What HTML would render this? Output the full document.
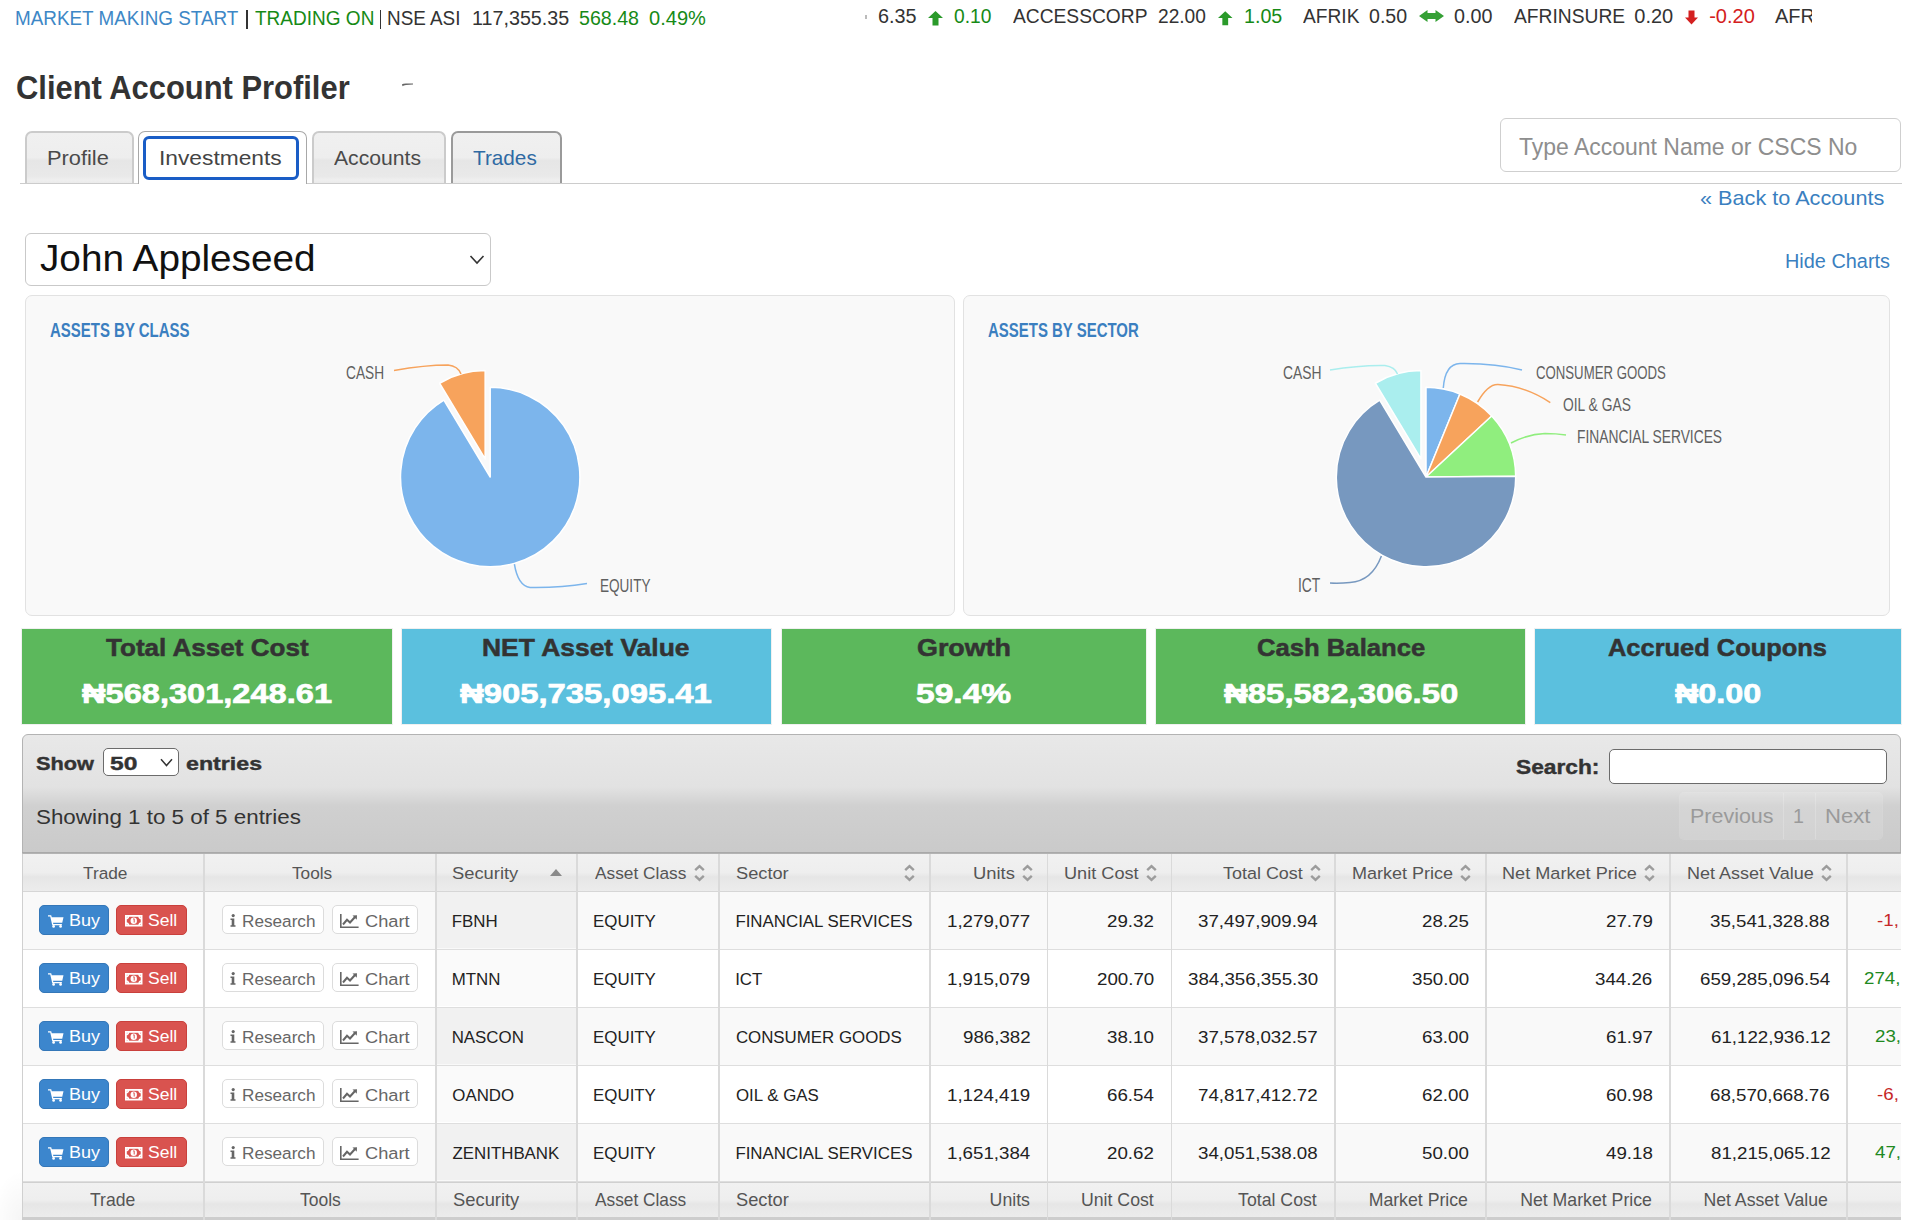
<!DOCTYPE html><html><head><meta charset="utf-8"><title>Client Account Profiler</title><style>
*{box-sizing:border-box;margin:0;padding:0}
html,body{width:1920px;height:1220px;overflow:hidden;background:#fff}
body{position:relative;font-family:"Liberation Sans",sans-serif}
.t{position:absolute;white-space:nowrap;transform-origin:0 0;font-family:"Liberation Sans",sans-serif}
.a{position:absolute}
svg.a{overflow:visible}
</style></head><body><span class="t" style="left:15.48px;top:9.40px;font-size:19.86px;line-height:19.86px;color:#3d87c6;transform:scaleX(0.9502);">MARKET MAKING START</span><div class="a" style="left:246px;top:10.3px;width:1.5px;height:19.2px;background:#333"></div><span class="t" style="left:254.62px;top:9.40px;font-size:19.86px;line-height:19.86px;color:#168a16;transform:scaleX(0.9574);">TRADING ON</span><div class="a" style="left:379.8px;top:10.3px;width:1.5px;height:19.2px;background:#333"></div><span class="t" style="left:387.23px;top:9.40px;font-size:19.86px;line-height:19.86px;color:#333;transform:scaleX(0.9507);">NSE ASI</span><span class="t" style="left:471.51px;top:9.40px;font-size:19.86px;line-height:19.86px;color:#333;transform:scaleX(0.9929);">117,355.35</span><span class="t" style="left:579.31px;top:9.40px;font-size:19.86px;line-height:19.86px;color:#168a16;transform:scaleX(0.9882);">568.48</span><span class="t" style="left:649.29px;top:9.40px;font-size:19.86px;line-height:19.86px;color:#168a16;transform:scaleX(1.0100);">0.49%</span><div class="a" style="left:865px;top:15px;width:2px;height:4px;background:#bbb"></div><span class="t" style="left:877.76px;top:5.60px;font-size:20.0px;line-height:20.0px;color:#333;transform:scaleX(0.9905);">6.35</span><svg class="a" style="left:927.5px;top:11px" width="15.0" height="14.5" viewBox="0 0 15 14.5"><path d="M7.5 0 L15 7 L10.5 7 L10.5 14.5 L4.5 14.5 L4.5 7 L0 7 Z" fill="#2a9a2a"/></svg><span class="t" style="left:953.83px;top:5.60px;font-size:20.0px;line-height:20.0px;color:#168a16;transform:scaleX(0.9599);">0.10</span><span class="t" style="left:1012.50px;top:5.60px;font-size:20.0px;line-height:20.0px;color:#333;transform:scaleX(0.9605);">ACCESSCORP</span><span class="t" style="left:1157.79px;top:5.60px;font-size:20.0px;line-height:20.0px;color:#333;transform:scaleX(0.9570);">22.00</span><svg class="a" style="left:1218px;top:11px" width="14.5" height="14.5" viewBox="0 0 15 14.5"><path d="M7.5 0 L15 7 L10.5 7 L10.5 14.5 L4.5 14.5 L4.5 7 L0 7 Z" fill="#2a9a2a"/></svg><span class="t" style="left:1243.52px;top:5.60px;font-size:20.0px;line-height:20.0px;color:#168a16;transform:scaleX(0.9835);">1.05</span><span class="t" style="left:1302.70px;top:5.60px;font-size:20.0px;line-height:20.0px;color:#333;transform:scaleX(0.9582);">AFRIK</span><span class="t" style="left:1369.31px;top:5.60px;font-size:20.0px;line-height:20.0px;color:#333;transform:scaleX(0.9786);">0.50</span><svg class="a" style="left:1419px;top:10px" width="25" height="12" viewBox="0 0 25 12"><path d="M0 6 L8.5 0 L8.5 3 L16.5 3 L16.5 0 L25 6 L16.5 12 L16.5 9 L8.5 9 L8.5 12 Z" fill="#35a035"/></svg><span class="t" style="left:1454.31px;top:5.60px;font-size:20.0px;line-height:20.0px;color:#333;transform:scaleX(0.9866);">0.00</span><span class="t" style="left:1513.60px;top:5.60px;font-size:20.0px;line-height:20.0px;color:#333;transform:scaleX(0.9623);">AFRINSURE</span><span class="t" style="left:1634.30px;top:5.60px;font-size:20.0px;line-height:20.0px;color:#333;">0.20</span><svg class="a" style="left:1685px;top:9.5px" width="13" height="14.5" viewBox="0 0 13 14.5"><path d="M6.5 14.5 L13 7.5 L9.5 7.5 L9.5 0.5 L3.5 0.5 L3.5 7.5 L0 7.5 Z" fill="#d42020"/></svg><span class="t" style="left:1709.20px;top:5.60px;font-size:20.0px;line-height:20.0px;color:#d42020;">-0.20</span><div class="a" style="left:1770px;top:0;width:42px;height:36px;overflow:hidden"><span class="t" style="left:5.00px;top:5.60px;font-size:20.0px;line-height:20.0px;color:#333;">AFRINSURE</span></div><span class="t" style="left:16.23px;top:70.40px;font-size:34.0px;line-height:34.0px;color:#333;font-weight:bold;transform:scaleX(0.9089);">Client Account Profiler</span><svg class="a" style="left:400px;top:80px" width="16" height="10" viewBox="0 0 16 10"><path d="M2 4.2 Q3 3.6 6 3.5 L13 3.6 L13 4.4 L6 5 Q3.5 5.4 2.5 6.2 Z" fill="#666"/></svg><div class="a" style="left:25px;top:131.3px;width:108.5px;height:52.5px;border:2px solid #cbcbcb;border-bottom:none;border-radius:7px 7px 0 0;background:linear-gradient(to bottom,#f0f0f0 0%,#eeeeee 48%,#e6e6e6 54%,#e9e9e9 85%,#efefef 92%,#e9e9e9 100%)"></div><span class="t" style="left:46.58px;top:148.00px;font-size:20.29px;line-height:20.29px;color:#4a4a4a;transform:scaleX(1.0759);">Profile</span><div class="a" style="left:138px;top:131.3px;width:169px;height:52.5px;border:1.7px solid #a8a8a8;border-bottom:none;border-radius:7px 7px 0 0;background:#fff"></div><div class="a" style="left:143px;top:136px;width:155.5px;height:43.5px;border:3px solid #1a5dc6;border-radius:6px"></div><span class="t" style="left:158.78px;top:148.00px;font-size:20.29px;line-height:20.29px;color:#444;transform:scaleX(1.1222);">Investments</span><div class="a" style="left:311.5px;top:131.3px;width:134.5px;height:52.5px;border:2px solid #cbcbcb;border-bottom:none;border-radius:7px 7px 0 0;background:linear-gradient(to bottom,#f0f0f0 0%,#eeeeee 48%,#e6e6e6 54%,#e9e9e9 85%,#efefef 92%,#e9e9e9 100%)"></div><span class="t" style="left:334.00px;top:148.00px;font-size:20.29px;line-height:20.29px;color:#4a4a4a;transform:scaleX(1.0434);">Accounts</span><div class="a" style="left:451px;top:131.3px;width:110.5px;height:52.5px;border:2px solid #9a9a9a;border-bottom:none;border-radius:7px 7px 0 0;background:linear-gradient(to bottom,#f0f0f0 0%,#eeeeee 48%,#e6e6e6 54%,#e9e9e9 85%,#efefef 92%,#e9e9e9 100%)"></div><span class="t" style="left:472.59px;top:148.00px;font-size:20.29px;line-height:20.29px;color:#2f6aa3;transform:scaleX(1.0220);">Trades</span><div class="a" style="left:20px;top:182.6px;width:118px;height:1.7px;background:#cccccc"></div><div class="a" style="left:307px;top:182.6px;width:1595px;height:1.7px;background:#cccccc"></div><div class="a" style="left:1499.5px;top:118.3px;width:401px;height:53.5px;border:1.5px solid #cfcfcf;border-radius:6px;background:#fff"></div><span class="t" style="left:1518.92px;top:134.50px;font-size:23.86px;line-height:23.86px;color:#8e8e8e;transform:scaleX(0.9628);">Type Account Name or CSCS No</span><span class="t" style="left:1700.16px;top:188.40px;font-size:20.57px;line-height:20.57px;color:#3a7fc0;transform:scaleX(1.0539);">« Back to Accounts</span><span class="t" style="left:1785.37px;top:251.70px;font-size:19.57px;line-height:19.57px;color:#3a7fc0;transform:scaleX(1.0165);">Hide Charts</span><div class="a" style="left:25px;top:232.5px;width:465.5px;height:53.5px;border:1.5px solid #c9c9c9;border-radius:6px;background:#fff"></div><span class="t" style="left:40.39px;top:239.50px;font-size:37.14px;line-height:37.14px;color:#111;transform:scaleX(1.0428);">John Appleseed</span><svg class="a" style="left:469px;top:254px" width="16" height="11" viewBox="0 0 16 11"><path d="M1.5 2 L8 9 L14.5 2" fill="none" stroke="#333" stroke-width="1.6"/></svg><div class="a" style="left:24.5px;top:294.8px;width:930px;height:321.7px;border:1.5px solid #e2e2e2;border-radius:7px;background:#f9f9f9"></div><div class="a" style="left:963px;top:294.8px;width:926.5px;height:321.7px;border:1.5px solid #e2e2e2;border-radius:7px;background:#f9f9f9"></div><span class="t" style="left:49.64px;top:320.00px;font-size:20.71px;line-height:20.71px;color:#3b7fc0;font-weight:bold;transform:scaleX(0.7236);">ASSETS BY CLASS</span><span class="t" style="left:988.14px;top:320.00px;font-size:20.71px;line-height:20.71px;color:#3b7fc0;font-weight:bold;transform:scaleX(0.7229);">ASSETS BY SECTOR</span><svg class="a" style="left:0;top:0" width="1920" height="1220"><path d="M490.20 477.00 L490.20 387.30 A89.7 89.7 0 1 1 443.89 400.18 Z" fill="#7cb5ec" stroke="#fff" stroke-width="1.5" stroke-linejoin="round"/><path d="M485.16 458.89 L439.58 383.26 A88.3 88.3 0 0 1 485.16 370.59 Z" fill="#f7a35c" stroke="#fff" stroke-width="1.5" stroke-linejoin="round"/><path d="M394 370.5 Q425 365 448 365 Q458 366 461 374" fill="none" stroke="#f7a35c" stroke-width="1.5"/><path d="M514.4 564.2 Q518 586 530 587.5 Q560 588 587 583.5" fill="none" stroke="#7cb5ec" stroke-width="1.5"/><path d="M1426.00 477.00 L1426.00 387.30 A89.7 89.7 0 0 1 1459.89 393.95 Z" fill="#7cb5ec" stroke="#fff" stroke-width="1.5" stroke-linejoin="round"/><path d="M1426.00 477.00 L1459.89 393.95 A89.7 89.7 0 0 1 1491.71 415.94 Z" fill="#f7a35c" stroke="#fff" stroke-width="1.5" stroke-linejoin="round"/><path d="M1426.00 477.00 L1491.71 415.94 A89.7 89.7 0 0 1 1515.70 476.22 Z" fill="#90ee7e" stroke="#fff" stroke-width="1.5" stroke-linejoin="round"/><path d="M1426.00 477.00 L1515.70 476.22 A89.7 89.7 0 1 1 1379.69 400.18 Z" fill="#7798bf" stroke="#fff" stroke-width="1.5" stroke-linejoin="round"/><path d="M1420.96 458.89 L1375.38 383.26 A88.3 88.3 0 0 1 1420.96 370.59 Z" fill="#aaeeee" stroke="#fff" stroke-width="1.5" stroke-linejoin="round"/><path d="M1330 370 Q1360 365 1385 365.5 Q1395 367 1397.5 374" fill="none" stroke="#aaeeee" stroke-width="1.5"/><path d="M1443.3 388 Q1445 364 1460 363.5 Q1495 363 1522 370" fill="none" stroke="#7cb5ec" stroke-width="1.5"/><path d="M1477.6 402 Q1488 384 1498 384.5 Q1525 386 1550.3 402.6" fill="none" stroke="#f7a35c" stroke-width="1.5"/><path d="M1511 443 Q1528 434 1545 433.5 Q1556 433.5 1566 435" fill="none" stroke="#90ee7e" stroke-width="1.5"/><path d="M1381.4 556 Q1372 581 1350 582.5 Q1340 583.5 1330 583" fill="none" stroke="#7798bf" stroke-width="1.5"/></svg><span class="t" style="left:346.33px;top:363.80px;font-size:18.29px;line-height:18.29px;color:#606060;transform:scaleX(0.7484);">CASH</span><span class="t" style="left:599.60px;top:576.50px;font-size:18.57px;line-height:18.57px;color:#606060;transform:scaleX(0.7302);">EQUITY</span><span class="t" style="left:1282.81px;top:363.60px;font-size:18.0px;line-height:18.0px;color:#606060;transform:scaleX(0.7692);">CASH</span><span class="t" style="left:1536.14px;top:363.60px;font-size:18.0px;line-height:18.0px;color:#606060;transform:scaleX(0.7330);">CONSUMER GOODS</span><span class="t" style="left:1563.20px;top:395.70px;font-size:18.57px;line-height:18.57px;color:#606060;transform:scaleX(0.7445);">OIL &amp; GAS</span><span class="t" style="left:1577.32px;top:427.00px;font-size:19.14px;line-height:19.14px;color:#606060;transform:scaleX(0.7223);">FINANCIAL SERVICES</span><span class="t" style="left:1298.17px;top:574.90px;font-size:20.29px;line-height:20.29px;color:#606060;transform:scaleX(0.6822);">ICT</span><div class="a" style="left:21.5px;top:629.3px;width:370.5px;height:94.4px;background:#5cb85c;box-shadow:0 0 0 1px rgba(0,0,0,0.06)"></div><span class="t" style="left:105.78px;top:636.80px;font-size:23.43px;line-height:23.43px;color:#333;font-weight:bold;transform:scaleX(1.1121);-webkit-text-stroke:0.5px #333;">Total Asset Cost</span><span class="t" style="left:81.90px;top:680.40px;font-size:27.86px;line-height:27.86px;color:#fff;font-weight:bold;transform:scaleX(1.1695);-webkit-text-stroke:0.7px #fff;">₦568,301,248.61</span><div class="a" style="left:401.5px;top:629.3px;width:369.5px;height:94.4px;background:#5bc0de;box-shadow:0 0 0 1px rgba(0,0,0,0.06)"></div><span class="t" style="left:482.31px;top:636.80px;font-size:23.43px;line-height:23.43px;color:#333;font-weight:bold;transform:scaleX(1.1277);-webkit-text-stroke:0.5px #333;">NET Asset Value</span><span class="t" style="left:460.00px;top:680.40px;font-size:27.86px;line-height:27.86px;color:#fff;font-weight:bold;transform:scaleX(1.1779);-webkit-text-stroke:0.7px #fff;">₦905,735,095.41</span><div class="a" style="left:782px;top:629.3px;width:364px;height:94.4px;background:#5cb85c;box-shadow:0 0 0 1px rgba(0,0,0,0.06)"></div><span class="t" style="left:916.97px;top:636.80px;font-size:23.43px;line-height:23.43px;color:#333;font-weight:bold;transform:scaleX(1.1471);-webkit-text-stroke:0.5px #333;">Growth</span><span class="t" style="left:916.48px;top:680.40px;font-size:27.86px;line-height:27.86px;color:#fff;font-weight:bold;transform:scaleX(1.2051);-webkit-text-stroke:0.7px #fff;">59.4%</span><div class="a" style="left:1156px;top:629.3px;width:369px;height:94.4px;background:#5cb85c;box-shadow:0 0 0 1px rgba(0,0,0,0.06)"></div><span class="t" style="left:1256.51px;top:636.80px;font-size:23.43px;line-height:23.43px;color:#333;font-weight:bold;transform:scaleX(1.0951);-webkit-text-stroke:0.5px #333;">Cash Balance</span><span class="t" style="left:1223.50px;top:680.40px;font-size:27.86px;line-height:27.86px;color:#fff;font-weight:bold;transform:scaleX(1.1818);-webkit-text-stroke:0.7px #fff;">₦85,582,306.50</span><div class="a" style="left:1535px;top:629.3px;width:365.5px;height:94.4px;background:#5bc0de;box-shadow:0 0 0 1px rgba(0,0,0,0.06)"></div><span class="t" style="left:1608.46px;top:636.80px;font-size:23.43px;line-height:23.43px;color:#333;font-weight:bold;transform:scaleX(1.0856);-webkit-text-stroke:0.5px #333;">Accrued Coupons</span><span class="t" style="left:1675.00px;top:680.40px;font-size:27.86px;line-height:27.86px;color:#fff;font-weight:bold;transform:scaleX(1.1610);-webkit-text-stroke:0.7px #fff;">₦0.00</span><div class="a" style="left:0;top:1170px;width:21.5px;height:50px;background:radial-gradient(ellipse 30px 50px at 100% 100%,rgba(0,0,0,0.04),rgba(0,0,0,0))"></div><div class="a" style="left:21.5px;top:840px;width:1879.5px;height:400px;border:1.5px solid #d0d0d0;background:#fff"></div><div class="a" style="left:21.5px;top:733.8px;width:1879.5px;height:120px;border:1.5px solid #b3b3b3;border-radius:6px 6px 0 0;background:linear-gradient(to bottom,#e8e8e8 0%,#e2e2e2 44%,#d0d0d0 60%,#cacaca 100%)"></div><div class="a" style="left:21.5px;top:851.6px;width:1879.5px;height:1.6px;background:#a9a9a9"></div><span class="t" style="left:36.03px;top:754.10px;font-size:19.14px;line-height:19.14px;color:#333;font-weight:bold;transform:scaleX(1.1373);-webkit-text-stroke:0.4px #333;">Show</span><div class="a" style="left:103.4px;top:748.2px;width:75.6px;height:28.2px;border:1.5px solid #6b6b6b;border-radius:5px;background:#fff"></div><span class="t" style="left:110.36px;top:754.10px;font-size:19.14px;line-height:19.14px;color:#333;font-weight:bold;transform:scaleX(1.2872);-webkit-text-stroke:0.4px #333;">50</span><svg class="a" style="left:160px;top:758px" width="13" height="9" viewBox="0 0 13 9"><path d="M1 1.2 L6.5 7.5 L12 1.2" fill="none" stroke="#333" stroke-width="1.5"/></svg><span class="t" style="left:185.95px;top:754.10px;font-size:19.14px;line-height:19.14px;color:#333;font-weight:bold;transform:scaleX(1.2133);-webkit-text-stroke:0.4px #333;">entries</span><span class="t" style="left:35.59px;top:807.80px;font-size:19.86px;line-height:19.86px;color:#333;transform:scaleX(1.1266);">Showing 1 to 5 of 5 entries</span><span class="t" style="left:1516.44px;top:756.50px;font-size:20.43px;line-height:20.43px;color:#333;font-weight:bold;transform:scaleX(1.1138);-webkit-text-stroke:0.4px #333;">Search:</span><div class="a" style="left:1608.5px;top:748.5px;width:278px;height:35.7px;border:1.5px solid #6b6b6b;border-radius:5px;background:#fff"></div><div class="a" style="left:1680px;top:793.4px;width:201.6px;height:45.3px;border-radius:4px;background:rgba(255,255,255,0.12);box-shadow:0 0 0 1px rgba(255,255,255,0.15)"></div><div class="a" style="left:1782.5px;top:793.4px;width:1.5px;height:45.3px;background:rgba(255,255,255,0.2)"></div><div class="a" style="left:1814.5px;top:793.4px;width:1.5px;height:45.3px;background:rgba(255,255,255,0.2)"></div><span class="t" style="left:1690.07px;top:807.30px;font-size:19.86px;line-height:19.86px;color:#9a9a9a;transform:scaleX(1.0808);">Previous</span><span class="t" style="left:1793.22px;top:807.30px;font-size:19.86px;line-height:19.86px;color:#9a9a9a;transform:scaleX(0.9884);">1</span><span class="t" style="left:1824.52px;top:807.30px;font-size:19.86px;line-height:19.86px;color:#9a9a9a;transform:scaleX(1.1121);">Next</span><div class="a" style="left:21.5px;top:0;width:1879.5px;height:1220px;overflow:hidden"><div class="a" style="left:1.5px;top:853.9px;width:1878px;height:38.1px;background:linear-gradient(to bottom,#f1f1f1 0%,#eeeeee 50%,#e6e6e6 62%,#ececec 100%);border-bottom:1.5px solid #d6d6d6"></div><div class="a" style="left:1.5px;top:891.7px;width:1878px;height:58px;background:#f9f9f9;border-bottom:1.5px solid #dedede"></div><div class="a" style="left:414.5px;top:891.7px;width:141.20000000000005px;height:56.5px;background:#f1f1f1"></div><div class="a" style="left:1.5px;top:949.7px;width:1878px;height:58px;background:#ffffff;border-bottom:1.5px solid #dedede"></div><div class="a" style="left:414.5px;top:949.7px;width:141.20000000000005px;height:56.5px;background:#fafafa"></div><div class="a" style="left:1.5px;top:1007.7px;width:1878px;height:58px;background:#f9f9f9;border-bottom:1.5px solid #dedede"></div><div class="a" style="left:414.5px;top:1007.7px;width:141.20000000000005px;height:56.5px;background:#f1f1f1"></div><div class="a" style="left:1.5px;top:1065.7px;width:1878px;height:58px;background:#ffffff;border-bottom:1.5px solid #dedede"></div><div class="a" style="left:414.5px;top:1065.7px;width:141.20000000000005px;height:56.5px;background:#fafafa"></div><div class="a" style="left:1.5px;top:1123.7px;width:1878px;height:58px;background:#f9f9f9;border-bottom:1.5px solid #dedede"></div><div class="a" style="left:414.5px;top:1123.7px;width:141.20000000000005px;height:56.5px;background:#f1f1f1"></div><div class="a" style="left:1.5px;top:1181.7px;width:1878px;height:35.799999999999955px;background:linear-gradient(to bottom,#f1f1f1 0%,#eeeeee 50%,#e6e6e6 62%,#ececec 100%);border-top:1.5px solid #d0d0d0"></div><div class="a" style="left:0;top:1217.3px;width:1880px;height:3px;background:#cdcdcd"></div><div class="a" style="left:181.75px;top:853.9px;width:1.5px;height:367.6px;background:#dadada"></div><div class="a" style="left:413.75px;top:853.9px;width:1.5px;height:367.6px;background:#dadada"></div><div class="a" style="left:554.95px;top:853.9px;width:1.5px;height:367.6px;background:#dadada"></div><div class="a" style="left:696.75px;top:853.9px;width:1.5px;height:367.6px;background:#dadada"></div><div class="a" style="left:907.75px;top:853.9px;width:1.5px;height:367.6px;background:#dadada"></div><div class="a" style="left:1025.05px;top:853.9px;width:1.5px;height:367.6px;background:#dadada"></div><div class="a" style="left:1149.45px;top:853.9px;width:1.5px;height:367.6px;background:#dadada"></div><div class="a" style="left:1312.75px;top:853.9px;width:1.5px;height:367.6px;background:#dadada"></div><div class="a" style="left:1463.95px;top:853.9px;width:1.5px;height:367.6px;background:#dadada"></div><div class="a" style="left:1647.75px;top:853.9px;width:1.5px;height:367.6px;background:#dadada"></div><div class="a" style="left:1824.75px;top:853.9px;width:1.5px;height:367.6px;background:#dadada"></div></div><span class="t" style="left:82.88px;top:864.80px;font-size:16.43px;line-height:16.43px;color:#555;transform:scaleX(1.0514);">Trade</span><span class="t" style="left:292.29px;top:864.80px;font-size:16.43px;line-height:16.43px;color:#555;transform:scaleX(1.0496);">Tools</span><span class="t" style="left:452.22px;top:864.80px;font-size:16.43px;line-height:16.43px;color:#555;transform:scaleX(1.1171);">Security</span><svg class="a" style="left:549.5px;top:869px" width="12" height="7" viewBox="0 0 12 7"><path d="M6 0 L12 7 L0 7 Z" fill="#8a8a8a"/></svg><span class="t" style="left:594.90px;top:864.80px;font-size:16.43px;line-height:16.43px;color:#555;transform:scaleX(1.0531);">Asset Class</span><svg class="a" style="left:693.5px;top:864.5px" width="11" height="16" viewBox="0 0 11 16"><path d="M1.2 5.2 L5.5 1.2 L9.8 5.2 M1.2 10.8 L5.5 14.8 L9.8 10.8" fill="none" stroke="#9c9c9c" stroke-width="2.4"/></svg><span class="t" style="left:735.92px;top:864.80px;font-size:16.43px;line-height:16.43px;color:#555;transform:scaleX(1.1094);">Sector</span><svg class="a" style="left:903.5px;top:864.5px" width="11" height="16" viewBox="0 0 11 16"><path d="M1.2 5.2 L5.5 1.2 L9.8 5.2 M1.2 10.8 L5.5 14.8 L9.8 10.8" fill="none" stroke="#9c9c9c" stroke-width="2.4"/></svg><span class="t" style="left:972.66px;top:864.80px;font-size:16.43px;line-height:16.43px;color:#555;transform:scaleX(1.1199);">Units</span><svg class="a" style="left:1021.5px;top:864.5px" width="11" height="16" viewBox="0 0 11 16"><path d="M1.2 5.2 L5.5 1.2 L9.8 5.2 M1.2 10.8 L5.5 14.8 L9.8 10.8" fill="none" stroke="#9c9c9c" stroke-width="2.4"/></svg><span class="t" style="left:1063.67px;top:864.80px;font-size:16.43px;line-height:16.43px;color:#555;transform:scaleX(1.1056);">Unit Cost</span><svg class="a" style="left:1145.5px;top:864.5px" width="11" height="16" viewBox="0 0 11 16"><path d="M1.2 5.2 L5.5 1.2 L9.8 5.2 M1.2 10.8 L5.5 14.8 L9.8 10.8" fill="none" stroke="#9c9c9c" stroke-width="2.4"/></svg><span class="t" style="left:1222.97px;top:864.80px;font-size:16.43px;line-height:16.43px;color:#555;transform:scaleX(1.0924);">Total Cost</span><svg class="a" style="left:1309.5px;top:864.5px" width="11" height="16" viewBox="0 0 11 16"><path d="M1.2 5.2 L5.5 1.2 L9.8 5.2 M1.2 10.8 L5.5 14.8 L9.8 10.8" fill="none" stroke="#9c9c9c" stroke-width="2.4"/></svg><span class="t" style="left:1352.32px;top:864.80px;font-size:16.43px;line-height:16.43px;color:#555;transform:scaleX(1.0973);">Market Price</span><svg class="a" style="left:1460px;top:864.5px" width="11" height="16" viewBox="0 0 11 16"><path d="M1.2 5.2 L5.5 1.2 L9.8 5.2 M1.2 10.8 L5.5 14.8 L9.8 10.8" fill="none" stroke="#9c9c9c" stroke-width="2.4"/></svg><span class="t" style="left:1502.32px;top:864.80px;font-size:16.43px;line-height:16.43px;color:#555;transform:scaleX(1.1034);">Net Market Price</span><svg class="a" style="left:1643.5px;top:864.5px" width="11" height="16" viewBox="0 0 11 16"><path d="M1.2 5.2 L5.5 1.2 L9.8 5.2 M1.2 10.8 L5.5 14.8 L9.8 10.8" fill="none" stroke="#9c9c9c" stroke-width="2.4"/></svg><span class="t" style="left:1686.57px;top:864.80px;font-size:16.43px;line-height:16.43px;color:#555;transform:scaleX(1.0968);">Net Asset Value</span><svg class="a" style="left:1820.5px;top:864.5px" width="11" height="16" viewBox="0 0 11 16"><path d="M1.2 5.2 L5.5 1.2 L9.8 5.2 M1.2 10.8 L5.5 14.8 L9.8 10.8" fill="none" stroke="#9c9c9c" stroke-width="2.4"/></svg><div class="a" style="left:38.9px;top:905.2px;width:70.4px;height:30.1px;background:#3c86cd;border:1px solid #3477b8;border-radius:5px"></div><svg class="a" style="left:48.2px;top:915px" width="15.5" height="13" viewBox="0 0 16 13"><path d="M0 0 H3.3 L3.9 2.2 H16 L14.7 7.8 H5.2 L5.5 9.1 H14.3 V10.4 H4.4 L2.3 1.4 H0 Z" fill="#fff"/><circle cx="5.8" cy="11.6" r="1.4" fill="#fff"/><circle cx="13" cy="11.6" r="1.4" fill="#fff"/></svg><span class="t" style="left:68.53px;top:912.40px;font-size:17.0px;line-height:17.0px;color:#fff;transform:scaleX(1.0574);">Buy</span><div class="a" style="left:115.5px;top:905.2px;width:71.3px;height:30.1px;background:#d9534f;border:1px solid #c9403c;border-radius:5px"></div><svg class="a" style="left:124.8px;top:915px" width="17.5" height="11.5" viewBox="0 0 17.5 11.5"><rect x="0.9" y="0.9" width="15.7" height="9.7" fill="none" stroke="#fff" stroke-width="1.8"/><path d="M0.9 3.5 Q3.5 3.5 3.5 0.9 M14 0.9 Q14 3.5 16.6 3.5 M0.9 8 Q3.5 8 3.5 10.6 M14 10.6 Q14 8 16.6 8" stroke="#fff" stroke-width="1.5" fill="none"/><circle cx="8.75" cy="5.75" r="3.2" fill="#fff"/><path d="M8.2 4 L9.2 3.8 L9.2 7.5" stroke="#d9534f" stroke-width="1" fill="none"/></svg><span class="t" style="left:147.98px;top:912.40px;font-size:17.0px;line-height:17.0px;color:#fff;transform:scaleX(1.0312);">Sell</span><div class="a" style="left:221.6px;top:905.4px;width:102.8px;height:29px;background:#fff;border:1.5px solid #dcdcdc;border-radius:5px"></div><svg class="a" style="left:230.3px;top:914px" width="6" height="13" viewBox="0 0 6 13"><circle cx="3.2" cy="1.6" r="1.6" fill="#666"/><path d="M0.5 4.5 L4.3 4.5 L4.3 11.2 L5.5 11.2 L5.5 12.7 L0.5 12.7 L0.5 11.2 L1.7 11.2 L1.7 6 L0.5 6 Z" fill="#666"/></svg><span class="t" style="left:241.50px;top:912.70px;font-size:17.14px;line-height:17.14px;color:#666;transform:scaleX(1.0025);">Research</span><div class="a" style="left:331.8px;top:905.4px;width:86.6px;height:29px;background:#fff;border:1.5px solid #dcdcdc;border-radius:5px"></div><svg class="a" style="left:340.2px;top:914px" width="19" height="14" viewBox="0 0 19 14"><path d="M0.8 0 L0.8 13.2 L18.6 13.2" fill="none" stroke="#666" stroke-width="1.6"/><path d="M3 10.5 L7 5.8 L10 8.5 L15 3" fill="none" stroke="#666" stroke-width="2"/><path d="M12.5 1.5 L17 1.2 L16.8 5.7 Z" fill="#666"/></svg><span class="t" style="left:364.55px;top:912.70px;font-size:17.14px;line-height:17.14px;color:#666;transform:scaleX(1.0646);">Chart</span><span class="t" style="left:451.70px;top:913.50px;font-size:16.86px;line-height:16.86px;color:#222;">FBNH</span><span class="t" style="left:593.10px;top:913.50px;font-size:16.86px;line-height:16.86px;color:#222;">EQUITY</span><span class="t" style="left:735.40px;top:913.50px;font-size:16.86px;line-height:16.86px;color:#222;">FINANCIAL SERVICES</span><span class="t" style="left:946.91px;top:913.50px;font-size:16.86px;line-height:16.86px;color:#222;transform:scaleX(1.1100);">1,279,077</span><span class="t" style="left:1107.33px;top:913.50px;font-size:16.86px;line-height:16.86px;color:#222;transform:scaleX(1.1100);">29.32</span><span class="t" style="left:1198.15px;top:913.50px;font-size:16.86px;line-height:16.86px;color:#222;transform:scaleX(1.1100);">37,497,909.94</span><span class="t" style="left:1422.32px;top:913.50px;font-size:16.86px;line-height:16.86px;color:#222;transform:scaleX(1.1100);">28.25</span><span class="t" style="left:1605.93px;top:913.50px;font-size:16.86px;line-height:16.86px;color:#222;transform:scaleX(1.1100);">27.79</span><span class="t" style="left:1710.47px;top:913.50px;font-size:16.86px;line-height:16.86px;color:#222;transform:scaleX(1.1100);">35,541,328.88</span><div class="a" style="left:1848px;top:891.3px;width:53px;height:56px;overflow:hidden"><span class="t" style="left:29.42px;top:22.20px;font-size:16.86px;line-height:16.86px;color:#c62828;transform:scaleX(1.1100);">-1,</span></div><div class="a" style="left:38.9px;top:963.2px;width:70.4px;height:30.1px;background:#3c86cd;border:1px solid #3477b8;border-radius:5px"></div><svg class="a" style="left:48.2px;top:973px" width="15.5" height="13" viewBox="0 0 16 13"><path d="M0 0 H3.3 L3.9 2.2 H16 L14.7 7.8 H5.2 L5.5 9.1 H14.3 V10.4 H4.4 L2.3 1.4 H0 Z" fill="#fff"/><circle cx="5.8" cy="11.6" r="1.4" fill="#fff"/><circle cx="13" cy="11.6" r="1.4" fill="#fff"/></svg><span class="t" style="left:68.53px;top:970.40px;font-size:17.0px;line-height:17.0px;color:#fff;transform:scaleX(1.0574);">Buy</span><div class="a" style="left:115.5px;top:963.2px;width:71.3px;height:30.1px;background:#d9534f;border:1px solid #c9403c;border-radius:5px"></div><svg class="a" style="left:124.8px;top:973px" width="17.5" height="11.5" viewBox="0 0 17.5 11.5"><rect x="0.9" y="0.9" width="15.7" height="9.7" fill="none" stroke="#fff" stroke-width="1.8"/><path d="M0.9 3.5 Q3.5 3.5 3.5 0.9 M14 0.9 Q14 3.5 16.6 3.5 M0.9 8 Q3.5 8 3.5 10.6 M14 10.6 Q14 8 16.6 8" stroke="#fff" stroke-width="1.5" fill="none"/><circle cx="8.75" cy="5.75" r="3.2" fill="#fff"/><path d="M8.2 4 L9.2 3.8 L9.2 7.5" stroke="#d9534f" stroke-width="1" fill="none"/></svg><span class="t" style="left:147.98px;top:970.40px;font-size:17.0px;line-height:17.0px;color:#fff;transform:scaleX(1.0312);">Sell</span><div class="a" style="left:221.6px;top:963.4px;width:102.8px;height:29px;background:#fff;border:1.5px solid #dcdcdc;border-radius:5px"></div><svg class="a" style="left:230.3px;top:972px" width="6" height="13" viewBox="0 0 6 13"><circle cx="3.2" cy="1.6" r="1.6" fill="#666"/><path d="M0.5 4.5 L4.3 4.5 L4.3 11.2 L5.5 11.2 L5.5 12.7 L0.5 12.7 L0.5 11.2 L1.7 11.2 L1.7 6 L0.5 6 Z" fill="#666"/></svg><span class="t" style="left:241.50px;top:970.70px;font-size:17.14px;line-height:17.14px;color:#666;transform:scaleX(1.0025);">Research</span><div class="a" style="left:331.8px;top:963.4px;width:86.6px;height:29px;background:#fff;border:1.5px solid #dcdcdc;border-radius:5px"></div><svg class="a" style="left:340.2px;top:972px" width="19" height="14" viewBox="0 0 19 14"><path d="M0.8 0 L0.8 13.2 L18.6 13.2" fill="none" stroke="#666" stroke-width="1.6"/><path d="M3 10.5 L7 5.8 L10 8.5 L15 3" fill="none" stroke="#666" stroke-width="2"/><path d="M12.5 1.5 L17 1.2 L16.8 5.7 Z" fill="#666"/></svg><span class="t" style="left:364.55px;top:970.70px;font-size:17.14px;line-height:17.14px;color:#666;transform:scaleX(1.0646);">Chart</span><span class="t" style="left:451.70px;top:971.50px;font-size:16.86px;line-height:16.86px;color:#222;">MTNN</span><span class="t" style="left:593.10px;top:971.50px;font-size:16.86px;line-height:16.86px;color:#222;">EQUITY</span><span class="t" style="left:735.20px;top:971.50px;font-size:16.86px;line-height:16.86px;color:#222;">ICT</span><span class="t" style="left:946.91px;top:971.50px;font-size:16.86px;line-height:16.86px;color:#222;transform:scaleX(1.1100);">1,915,079</span><span class="t" style="left:1096.70px;top:971.50px;font-size:16.86px;line-height:16.86px;color:#222;transform:scaleX(1.1100);">200.70</span><span class="t" style="left:1187.86px;top:971.50px;font-size:16.86px;line-height:16.86px;color:#222;transform:scaleX(1.1100);">384,356,355.30</span><span class="t" style="left:1411.80px;top:971.50px;font-size:16.86px;line-height:16.86px;color:#222;transform:scaleX(1.1100);">350.00</span><span class="t" style="left:1595.41px;top:971.50px;font-size:16.86px;line-height:16.86px;color:#222;transform:scaleX(1.1100);">344.26</span><span class="t" style="left:1699.85px;top:971.50px;font-size:16.86px;line-height:16.86px;color:#222;transform:scaleX(1.1100);">659,285,096.54</span><div class="a" style="left:1848px;top:949.3px;width:53px;height:56px;overflow:hidden"><span class="t" style="left:16.11px;top:22.20px;font-size:16.86px;line-height:16.86px;color:#1f8a1f;transform:scaleX(1.1100);">274,</span></div><div class="a" style="left:38.9px;top:1021.2px;width:70.4px;height:30.1px;background:#3c86cd;border:1px solid #3477b8;border-radius:5px"></div><svg class="a" style="left:48.2px;top:1031px" width="15.5" height="13" viewBox="0 0 16 13"><path d="M0 0 H3.3 L3.9 2.2 H16 L14.7 7.8 H5.2 L5.5 9.1 H14.3 V10.4 H4.4 L2.3 1.4 H0 Z" fill="#fff"/><circle cx="5.8" cy="11.6" r="1.4" fill="#fff"/><circle cx="13" cy="11.6" r="1.4" fill="#fff"/></svg><span class="t" style="left:68.53px;top:1028.40px;font-size:17.0px;line-height:17.0px;color:#fff;transform:scaleX(1.0574);">Buy</span><div class="a" style="left:115.5px;top:1021.2px;width:71.3px;height:30.1px;background:#d9534f;border:1px solid #c9403c;border-radius:5px"></div><svg class="a" style="left:124.8px;top:1031px" width="17.5" height="11.5" viewBox="0 0 17.5 11.5"><rect x="0.9" y="0.9" width="15.7" height="9.7" fill="none" stroke="#fff" stroke-width="1.8"/><path d="M0.9 3.5 Q3.5 3.5 3.5 0.9 M14 0.9 Q14 3.5 16.6 3.5 M0.9 8 Q3.5 8 3.5 10.6 M14 10.6 Q14 8 16.6 8" stroke="#fff" stroke-width="1.5" fill="none"/><circle cx="8.75" cy="5.75" r="3.2" fill="#fff"/><path d="M8.2 4 L9.2 3.8 L9.2 7.5" stroke="#d9534f" stroke-width="1" fill="none"/></svg><span class="t" style="left:147.98px;top:1028.40px;font-size:17.0px;line-height:17.0px;color:#fff;transform:scaleX(1.0312);">Sell</span><div class="a" style="left:221.6px;top:1021.4px;width:102.8px;height:29px;background:#fff;border:1.5px solid #dcdcdc;border-radius:5px"></div><svg class="a" style="left:230.3px;top:1030px" width="6" height="13" viewBox="0 0 6 13"><circle cx="3.2" cy="1.6" r="1.6" fill="#666"/><path d="M0.5 4.5 L4.3 4.5 L4.3 11.2 L5.5 11.2 L5.5 12.7 L0.5 12.7 L0.5 11.2 L1.7 11.2 L1.7 6 L0.5 6 Z" fill="#666"/></svg><span class="t" style="left:241.50px;top:1028.70px;font-size:17.14px;line-height:17.14px;color:#666;transform:scaleX(1.0025);">Research</span><div class="a" style="left:331.8px;top:1021.4px;width:86.6px;height:29px;background:#fff;border:1.5px solid #dcdcdc;border-radius:5px"></div><svg class="a" style="left:340.2px;top:1030px" width="19" height="14" viewBox="0 0 19 14"><path d="M0.8 0 L0.8 13.2 L18.6 13.2" fill="none" stroke="#666" stroke-width="1.6"/><path d="M3 10.5 L7 5.8 L10 8.5 L15 3" fill="none" stroke="#666" stroke-width="2"/><path d="M12.5 1.5 L17 1.2 L16.8 5.7 Z" fill="#666"/></svg><span class="t" style="left:364.55px;top:1028.70px;font-size:17.14px;line-height:17.14px;color:#666;transform:scaleX(1.0646);">Chart</span><span class="t" style="left:451.70px;top:1029.50px;font-size:16.86px;line-height:16.86px;color:#222;">NASCON</span><span class="t" style="left:593.10px;top:1029.50px;font-size:16.86px;line-height:16.86px;color:#222;">EQUITY</span><span class="t" style="left:735.90px;top:1029.50px;font-size:16.86px;line-height:16.86px;color:#222;">CONSUMER GOODS</span><span class="t" style="left:962.52px;top:1029.50px;font-size:16.86px;line-height:16.86px;color:#222;transform:scaleX(1.1100);">986,382</span><span class="t" style="left:1107.11px;top:1029.50px;font-size:16.86px;line-height:16.86px;color:#222;transform:scaleX(1.1100);">38.10</span><span class="t" style="left:1198.49px;top:1029.50px;font-size:16.86px;line-height:16.86px;color:#222;transform:scaleX(1.1100);">37,578,032.57</span><span class="t" style="left:1422.21px;top:1029.50px;font-size:16.86px;line-height:16.86px;color:#222;transform:scaleX(1.1100);">63.00</span><span class="t" style="left:1605.93px;top:1029.50px;font-size:16.86px;line-height:16.86px;color:#222;transform:scaleX(1.1100);">61.97</span><span class="t" style="left:1710.59px;top:1029.50px;font-size:16.86px;line-height:16.86px;color:#222;transform:scaleX(1.1100);">61,122,936.12</span><div class="a" style="left:1848px;top:1007.3px;width:53px;height:56px;overflow:hidden"><span class="t" style="left:26.61px;top:22.20px;font-size:16.86px;line-height:16.86px;color:#1f8a1f;transform:scaleX(1.1100);">23,</span></div><div class="a" style="left:38.9px;top:1079.2px;width:70.4px;height:30.1px;background:#3c86cd;border:1px solid #3477b8;border-radius:5px"></div><svg class="a" style="left:48.2px;top:1089px" width="15.5" height="13" viewBox="0 0 16 13"><path d="M0 0 H3.3 L3.9 2.2 H16 L14.7 7.8 H5.2 L5.5 9.1 H14.3 V10.4 H4.4 L2.3 1.4 H0 Z" fill="#fff"/><circle cx="5.8" cy="11.6" r="1.4" fill="#fff"/><circle cx="13" cy="11.6" r="1.4" fill="#fff"/></svg><span class="t" style="left:68.53px;top:1086.40px;font-size:17.0px;line-height:17.0px;color:#fff;transform:scaleX(1.0574);">Buy</span><div class="a" style="left:115.5px;top:1079.2px;width:71.3px;height:30.1px;background:#d9534f;border:1px solid #c9403c;border-radius:5px"></div><svg class="a" style="left:124.8px;top:1089px" width="17.5" height="11.5" viewBox="0 0 17.5 11.5"><rect x="0.9" y="0.9" width="15.7" height="9.7" fill="none" stroke="#fff" stroke-width="1.8"/><path d="M0.9 3.5 Q3.5 3.5 3.5 0.9 M14 0.9 Q14 3.5 16.6 3.5 M0.9 8 Q3.5 8 3.5 10.6 M14 10.6 Q14 8 16.6 8" stroke="#fff" stroke-width="1.5" fill="none"/><circle cx="8.75" cy="5.75" r="3.2" fill="#fff"/><path d="M8.2 4 L9.2 3.8 L9.2 7.5" stroke="#d9534f" stroke-width="1" fill="none"/></svg><span class="t" style="left:147.98px;top:1086.40px;font-size:17.0px;line-height:17.0px;color:#fff;transform:scaleX(1.0312);">Sell</span><div class="a" style="left:221.6px;top:1079.4px;width:102.8px;height:29px;background:#fff;border:1.5px solid #dcdcdc;border-radius:5px"></div><svg class="a" style="left:230.3px;top:1088px" width="6" height="13" viewBox="0 0 6 13"><circle cx="3.2" cy="1.6" r="1.6" fill="#666"/><path d="M0.5 4.5 L4.3 4.5 L4.3 11.2 L5.5 11.2 L5.5 12.7 L0.5 12.7 L0.5 11.2 L1.7 11.2 L1.7 6 L0.5 6 Z" fill="#666"/></svg><span class="t" style="left:241.50px;top:1086.70px;font-size:17.14px;line-height:17.14px;color:#666;transform:scaleX(1.0025);">Research</span><div class="a" style="left:331.8px;top:1079.4px;width:86.6px;height:29px;background:#fff;border:1.5px solid #dcdcdc;border-radius:5px"></div><svg class="a" style="left:340.2px;top:1088px" width="19" height="14" viewBox="0 0 19 14"><path d="M0.8 0 L0.8 13.2 L18.6 13.2" fill="none" stroke="#666" stroke-width="1.6"/><path d="M3 10.5 L7 5.8 L10 8.5 L15 3" fill="none" stroke="#666" stroke-width="2"/><path d="M12.5 1.5 L17 1.2 L16.8 5.7 Z" fill="#666"/></svg><span class="t" style="left:364.55px;top:1086.70px;font-size:17.14px;line-height:17.14px;color:#666;transform:scaleX(1.0646);">Chart</span><span class="t" style="left:452.30px;top:1087.50px;font-size:16.86px;line-height:16.86px;color:#222;">OANDO</span><span class="t" style="left:593.10px;top:1087.50px;font-size:16.86px;line-height:16.86px;color:#222;">EQUITY</span><span class="t" style="left:736.00px;top:1087.50px;font-size:16.86px;line-height:16.86px;color:#222;">OIL &amp; GAS</span><span class="t" style="left:946.91px;top:1087.50px;font-size:16.86px;line-height:16.86px;color:#222;transform:scaleX(1.1100);">1,124,419</span><span class="t" style="left:1107.00px;top:1087.50px;font-size:16.86px;line-height:16.86px;color:#222;transform:scaleX(1.1100);">66.54</span><span class="t" style="left:1198.49px;top:1087.50px;font-size:16.86px;line-height:16.86px;color:#222;transform:scaleX(1.1100);">74,817,412.72</span><span class="t" style="left:1422.21px;top:1087.50px;font-size:16.86px;line-height:16.86px;color:#222;transform:scaleX(1.1100);">62.00</span><span class="t" style="left:1605.82px;top:1087.50px;font-size:16.86px;line-height:16.86px;color:#222;transform:scaleX(1.1100);">60.98</span><span class="t" style="left:1710.47px;top:1087.50px;font-size:16.86px;line-height:16.86px;color:#222;transform:scaleX(1.1100);">68,570,668.76</span><div class="a" style="left:1848px;top:1065.3px;width:53px;height:56px;overflow:hidden"><span class="t" style="left:29.02px;top:22.20px;font-size:16.86px;line-height:16.86px;color:#c62828;transform:scaleX(1.1100);">-6,</span></div><div class="a" style="left:38.9px;top:1137.2px;width:70.4px;height:30.1px;background:#3c86cd;border:1px solid #3477b8;border-radius:5px"></div><svg class="a" style="left:48.2px;top:1147px" width="15.5" height="13" viewBox="0 0 16 13"><path d="M0 0 H3.3 L3.9 2.2 H16 L14.7 7.8 H5.2 L5.5 9.1 H14.3 V10.4 H4.4 L2.3 1.4 H0 Z" fill="#fff"/><circle cx="5.8" cy="11.6" r="1.4" fill="#fff"/><circle cx="13" cy="11.6" r="1.4" fill="#fff"/></svg><span class="t" style="left:68.53px;top:1144.40px;font-size:17.0px;line-height:17.0px;color:#fff;transform:scaleX(1.0574);">Buy</span><div class="a" style="left:115.5px;top:1137.2px;width:71.3px;height:30.1px;background:#d9534f;border:1px solid #c9403c;border-radius:5px"></div><svg class="a" style="left:124.8px;top:1147px" width="17.5" height="11.5" viewBox="0 0 17.5 11.5"><rect x="0.9" y="0.9" width="15.7" height="9.7" fill="none" stroke="#fff" stroke-width="1.8"/><path d="M0.9 3.5 Q3.5 3.5 3.5 0.9 M14 0.9 Q14 3.5 16.6 3.5 M0.9 8 Q3.5 8 3.5 10.6 M14 10.6 Q14 8 16.6 8" stroke="#fff" stroke-width="1.5" fill="none"/><circle cx="8.75" cy="5.75" r="3.2" fill="#fff"/><path d="M8.2 4 L9.2 3.8 L9.2 7.5" stroke="#d9534f" stroke-width="1" fill="none"/></svg><span class="t" style="left:147.98px;top:1144.40px;font-size:17.0px;line-height:17.0px;color:#fff;transform:scaleX(1.0312);">Sell</span><div class="a" style="left:221.6px;top:1137.4px;width:102.8px;height:29px;background:#fff;border:1.5px solid #dcdcdc;border-radius:5px"></div><svg class="a" style="left:230.3px;top:1146px" width="6" height="13" viewBox="0 0 6 13"><circle cx="3.2" cy="1.6" r="1.6" fill="#666"/><path d="M0.5 4.5 L4.3 4.5 L4.3 11.2 L5.5 11.2 L5.5 12.7 L0.5 12.7 L0.5 11.2 L1.7 11.2 L1.7 6 L0.5 6 Z" fill="#666"/></svg><span class="t" style="left:241.50px;top:1144.70px;font-size:17.14px;line-height:17.14px;color:#666;transform:scaleX(1.0025);">Research</span><div class="a" style="left:331.8px;top:1137.4px;width:86.6px;height:29px;background:#fff;border:1.5px solid #dcdcdc;border-radius:5px"></div><svg class="a" style="left:340.2px;top:1146px" width="19" height="14" viewBox="0 0 19 14"><path d="M0.8 0 L0.8 13.2 L18.6 13.2" fill="none" stroke="#666" stroke-width="1.6"/><path d="M3 10.5 L7 5.8 L10 8.5 L15 3" fill="none" stroke="#666" stroke-width="2"/><path d="M12.5 1.5 L17 1.2 L16.8 5.7 Z" fill="#666"/></svg><span class="t" style="left:364.55px;top:1144.70px;font-size:17.14px;line-height:17.14px;color:#666;transform:scaleX(1.0646);">Chart</span><span class="t" style="left:452.50px;top:1145.50px;font-size:16.86px;line-height:16.86px;color:#222;">ZENITHBANK</span><span class="t" style="left:593.10px;top:1145.50px;font-size:16.86px;line-height:16.86px;color:#222;">EQUITY</span><span class="t" style="left:735.40px;top:1145.50px;font-size:16.86px;line-height:16.86px;color:#222;">FINANCIAL SERVICES</span><span class="t" style="left:946.58px;top:1145.50px;font-size:16.86px;line-height:16.86px;color:#222;transform:scaleX(1.1100);">1,651,384</span><span class="t" style="left:1107.33px;top:1145.50px;font-size:16.86px;line-height:16.86px;color:#222;transform:scaleX(1.1100);">20.62</span><span class="t" style="left:1198.37px;top:1145.50px;font-size:16.86px;line-height:16.86px;color:#222;transform:scaleX(1.1100);">34,051,538.08</span><span class="t" style="left:1422.21px;top:1145.50px;font-size:16.86px;line-height:16.86px;color:#222;transform:scaleX(1.1100);">50.00</span><span class="t" style="left:1605.82px;top:1145.50px;font-size:16.86px;line-height:16.86px;color:#222;transform:scaleX(1.1100);">49.18</span><span class="t" style="left:1710.59px;top:1145.50px;font-size:16.86px;line-height:16.86px;color:#222;transform:scaleX(1.1100);">81,215,065.12</span><div class="a" style="left:1848px;top:1123.3px;width:53px;height:56px;overflow:hidden"><span class="t" style="left:27.17px;top:22.20px;font-size:16.86px;line-height:16.86px;color:#1f8a1f;transform:scaleX(1.1100);">47,</span></div><span class="t" style="left:90.45px;top:1192.30px;font-size:17.71px;line-height:17.71px;color:#555;transform:scaleX(0.9931);">Trade</span><span class="t" style="left:299.70px;top:1192.30px;font-size:17.71px;line-height:17.71px;color:#555;transform:scaleX(0.9880);">Tools</span><span class="t" style="left:452.87px;top:1192.30px;font-size:17.71px;line-height:17.71px;color:#555;transform:scaleX(1.0377);">Security</span><span class="t" style="left:595.40px;top:1192.30px;font-size:17.71px;line-height:17.71px;color:#555;transform:scaleX(0.9770);">Asset Class</span><span class="t" style="left:736.17px;top:1192.30px;font-size:17.71px;line-height:17.71px;color:#555;transform:scaleX(1.0322);">Sector</span><span class="t" style="left:989.61px;top:1192.30px;font-size:17.71px;line-height:17.71px;color:#555;">Units</span><span class="t" style="left:1080.99px;top:1192.30px;font-size:17.71px;line-height:17.71px;color:#555;">Unit Cost</span><span class="t" style="left:1238.08px;top:1192.30px;font-size:17.71px;line-height:17.71px;color:#555;">Total Cost</span><span class="t" style="left:1368.66px;top:1192.30px;font-size:17.71px;line-height:17.71px;color:#555;">Market Price</span><span class="t" style="left:1520.18px;top:1192.30px;font-size:17.71px;line-height:17.71px;color:#555;">Net Market Price</span><span class="t" style="left:1703.38px;top:1192.30px;font-size:17.71px;line-height:17.71px;color:#555;">Net Asset Value</span></body></html>
